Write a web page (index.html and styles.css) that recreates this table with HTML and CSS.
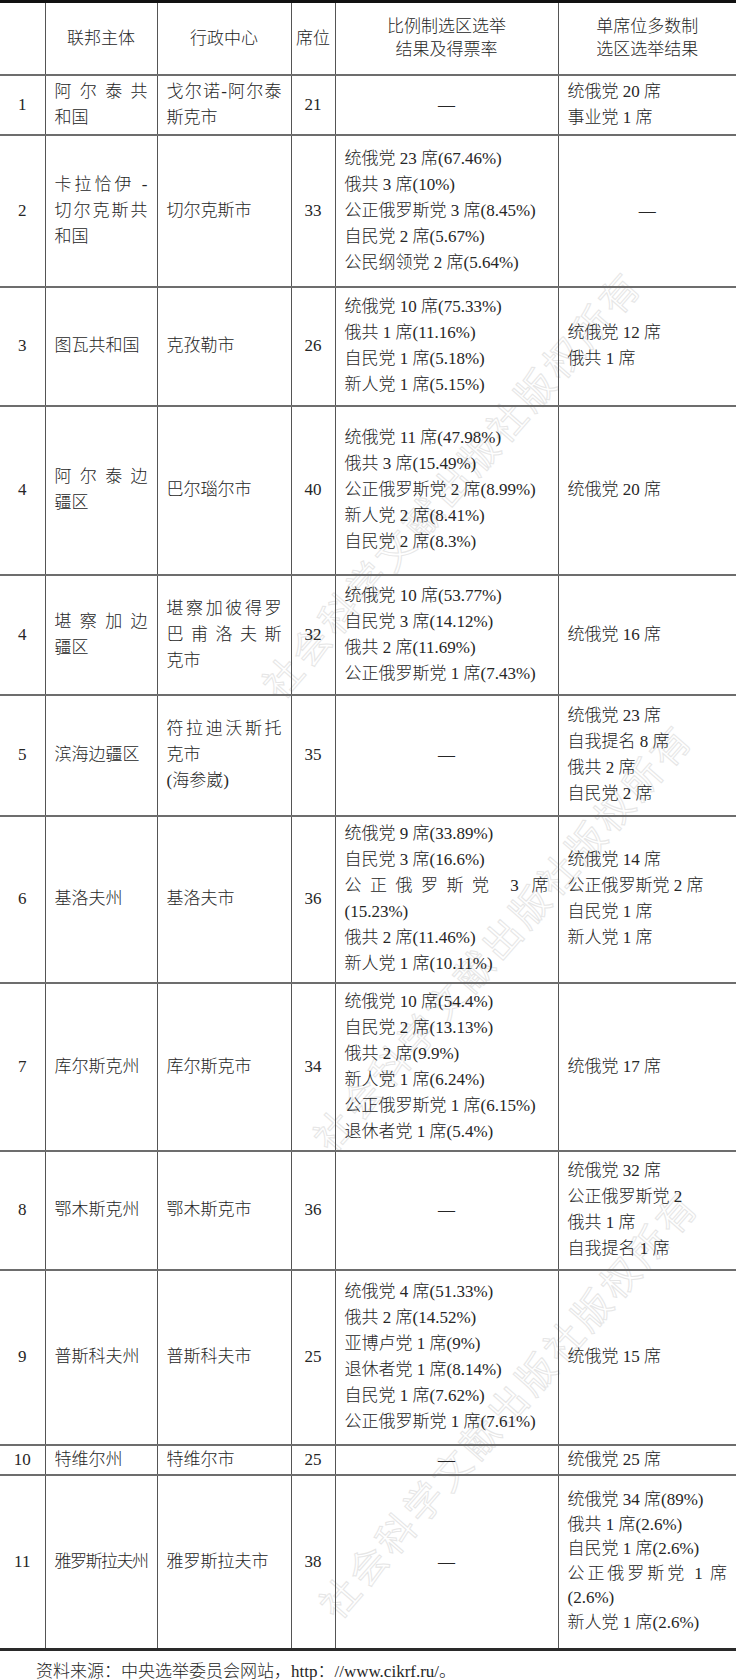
FILE: index.html
```html
<!DOCTYPE html>
<html lang="zh-CN">
<head>
<meta charset="utf-8">
<title>联邦主体选举结果</title>
<link rel="stylesheet" href="styles.css">
</head>
<body>
<div class="page">
  <div class="wm-layer" aria-hidden="true">
    <span class="wm w2">社会科学文献出版社版权所有</span>
    <span class="wm w4">社会科学文献出版社版权所有</span>
    <span class="wm w6">社会科学文献出版社版权所有</span>
  </div>

  <table class="tbl">
    <colgroup>
      <col class="c-no">
      <col class="c-subj">
      <col class="c-center">
      <col class="c-seat">
      <col class="c-prop">
      <col class="c-single">
    </colgroup>
    <thead>
      <tr class="h-head">
        <th></th>
        <th>联邦主体</th>
        <th>行政中心</th>
        <th class="seat">席位</th>
        <th><div>比例制选区选举</div><div>结果及得票率</div></th>
        <th><div>单席位多数制</div><div>选区选举结果</div></th>
      </tr>
    </thead>
    <tbody>
      <tr class="h60">
        <td class="no">1</td>
        <td><div class="j">阿尔泰共</div><div>和国</div></td>
        <td><div class="j">戈尔诺-阿尔泰</div><div>斯克市</div></td>
        <td class="seat">21</td>
        <td class="dash">—</td>
        <td><div>统俄党 20 席</div><div>事业党 1 席</div></td>
      </tr>
      <tr class="h152">
        <td class="no">2</td>
        <td><div class="j">卡拉恰伊 -</div><div class="j">切尔克斯共</div><div>和国</div></td>
        <td>切尔克斯市</td>
        <td class="seat">33</td>
        <td><div>统俄党 23 席(67.46%)</div><div>俄共 3 席(10%)</div><div>公正俄罗斯党 3 席(8.45%)</div><div>自民党 2 席(5.67%)</div><div>公民纲领党 2 席(5.64%)</div></td>
        <td class="dash">—</td>
      </tr>
      <tr class="h119">
        <td class="no">3</td>
        <td>图瓦共和国</td>
        <td>克孜勒市</td>
        <td class="seat">26</td>
        <td><div>统俄党 10 席(75.33%)</div><div>俄共 1 席(11.16%)</div><div>自民党 1 席(5.18%)</div><div>新人党 1 席(5.15%)</div></td>
        <td><div>统俄党 12 席</div><div>俄共 1 席</div></td>
      </tr>
      <tr class="h169">
        <td class="no">4</td>
        <td><div class="j">阿尔泰边</div><div>疆区</div></td>
        <td>巴尔瑙尔市</td>
        <td class="seat">40</td>
        <td><div>统俄党 11 席(47.98%)</div><div>俄共 3 席(15.49%)</div><div>公正俄罗斯党 2 席(8.99%)</div><div>新人党 2 席(8.41%)</div><div>自民党 2 席(8.3%)</div></td>
        <td>统俄党 20 席</td>
      </tr>
      <tr class="h120">
        <td class="no">4</td>
        <td><div class="j">堪察加边</div><div>疆区</div></td>
        <td><div class="j">堪察加彼得罗</div><div class="j">巴甫洛夫斯</div><div>克市</div></td>
        <td class="seat">32</td>
        <td><div>统俄党 10 席(53.77%)</div><div>自民党 3 席(14.12%)</div><div>俄共 2 席(11.69%)</div><div>公正俄罗斯党 1 席(7.43%)</div></td>
        <td>统俄党 16 席</td>
      </tr>
      <tr class="h121">
        <td class="no">5</td>
        <td>滨海边疆区</td>
        <td><div class="j">符拉迪沃斯托</div><div>克市</div><div>(海参崴)</div></td>
        <td class="seat">35</td>
        <td class="dash">—</td>
        <td><div>统俄党 23 席</div><div>自我提名 8 席</div><div>俄共 2 席</div><div>自民党 2 席</div></td>
      </tr>
      <tr class="h167">
        <td class="no">6</td>
        <td>基洛夫州</td>
        <td>基洛夫市</td>
        <td class="seat">36</td>
        <td><div>统俄党 9 席(33.89%)</div><div>自民党 3 席(16.6%)</div><div class="j">公正俄罗斯党 3 席</div><div>(15.23%)</div><div>俄共 2 席(11.46%)</div><div>新人党 1 席(10.11%)</div></td>
        <td><div>统俄党 14 席</div><div>公正俄罗斯党 2 席</div><div>自民党 1 席</div><div>新人党 1 席</div></td>
      </tr>
      <tr class="h168">
        <td class="no">7</td>
        <td>库尔斯克州</td>
        <td>库尔斯克市</td>
        <td class="seat">34</td>
        <td><div>统俄党 10 席(54.4%)</div><div>自民党 2 席(13.13%)</div><div>俄共 2 席(9.9%)</div><div>新人党 1 席(6.24%)</div><div>公正俄罗斯党 1 席(6.15%)</div><div>退休者党 1 席(5.4%)</div></td>
        <td>统俄党 17 席</td>
      </tr>
      <tr class="h119">
        <td class="no">8</td>
        <td>鄂木斯克州</td>
        <td>鄂木斯克市</td>
        <td class="seat">36</td>
        <td class="dash">—</td>
        <td><div>统俄党 32 席</div><div>公正俄罗斯党 2</div><div>俄共 1 席</div><div>自我提名 1 席</div></td>
      </tr>
      <tr class="h175">
        <td class="no">9</td>
        <td>普斯科夫州</td>
        <td>普斯科夫市</td>
        <td class="seat">25</td>
        <td><div>统俄党 4 席(51.33%)</div><div>俄共 2 席(14.52%)</div><div>亚博卢党 1 席(9%)</div><div>退休者党 1 席(8.14%)</div><div>自民党 1 席(7.62%)</div><div>公正俄罗斯党 1 席(7.61%)</div></td>
        <td>统俄党 15 席</td>
      </tr>
      <tr class="h30">
        <td class="no">10</td>
        <td>特维尔州</td>
        <td>特维尔市</td>
        <td class="seat">25</td>
        <td class="dash">—</td>
        <td>统俄党 25 席</td>
      </tr>
      <tr class="h175 last">
        <td class="no">11</td>
        <td class="tight">雅罗斯拉夫州</td>
        <td>雅罗斯拉夫市</td>
        <td class="seat">38</td>
        <td class="dash">—</td>
        <td class="narrow"><div>统俄党 34 席(89%)</div><div>俄共 1 席(2.6%)</div><div>自民党 1 席(2.6%)</div><div class="j">公正俄罗斯党 1 席</div><div>(2.6%)</div><div>新人党 1 席(2.6%)</div></td>
      </tr>
    </tbody>
  </table>

  <p class="source">资料来源：中央选举委员会网站，http：//www.cikrf.ru/。</p>
</div>
</body>
</html>
```

FILE: styles.css
```css
html, body {
  margin: 0;
  padding: 0;
  background: #ffffff;
}

.page {
  position: relative;
  width: 736px;
  height: 1680px;
  overflow: hidden;
  font-family: "Liberation Serif", "Noto Sans CJK SC", serif;
  color: #262626;
}

/* faint publisher watermark overlay */
.wm-layer {
  position: absolute;
  inset: 0;
  z-index: 0;
  pointer-events: none;
}

.wm {
  position: absolute;
  font-family: "Noto Sans CJK SC", sans-serif;
  font-size: 38px;
  line-height: 38px;
  letter-spacing: 4.5px;
  white-space: nowrap;
  color: transparent;
  -webkit-text-stroke: 1px #e6e6e6;
  transform-origin: 0 50%;
  transform: rotate(-48.8deg);
}

.w2 { left: 326px; top: 1592px; }
.w4 { left: 320px; top: 1125px; }
.w6 { left: 269px; top: 672px; }

/* table */
.tbl {
  position: relative;
  z-index: 1;
  width: 736px;
  table-layout: fixed;
  border-collapse: collapse;
  font-size: 17px;
  line-height: 26px;
  font-weight: 300;
  border-top: 3px solid #111;
  border-bottom: 3px solid #2a2a2a;
}

.c-no     { width: 45px; }
.c-subj   { width: 112px; }
.c-center { width: 134px; }
.c-seat   { width: 44px; }
.c-prop   { width: 223px; }
.c-single { width: 178px; }

.tbl th,
.tbl td {
  padding: 0 9px 0 9px;
  vertical-align: middle;
  text-align: left;
  border-left: 1px solid #555;
  border-bottom: 2px solid #6d6d6d;
  font-weight: 300;
}

.tbl th:first-child,
.tbl td:first-child {
  border-left: none;
}

.tbl th {
  text-align: center;
  line-height: 23px;
  padding: 0 2px;
}

.tbl td.no,
.tbl td.seat,
.tbl th.seat {
  text-align: center;
  padding: 0;
}

.tbl td.dash {
  text-align: center;
}

.tbl td.tight {
  letter-spacing: -1.5px;
  white-space: nowrap;
}

.tbl td.narrow {
  line-height: 24.5px;
}

.tbl tr.last td {
  border-bottom: 3px solid #2a2a2a;
}

.j {
  text-align: justify;
  text-align-last: justify;
}

/* row heights */
.h-head { height: 73px; }
.h30  { height: 30px; }
.h60  { height: 60px; }
.h119 { height: 119px; }
.h120 { height: 120px; }
.h121 { height: 121px; }
.h152 { height: 152px; }
.h167 { height: 167px; }
.h168 { height: 168px; }
.h169 { height: 169px; }
.h175 { height: 175px; }

.source {
  position: relative;
  z-index: 1;
  margin: 8px 0 0 36px;
  font-size: 17px;
  line-height: 26px;
  font-weight: 300;
}
```
